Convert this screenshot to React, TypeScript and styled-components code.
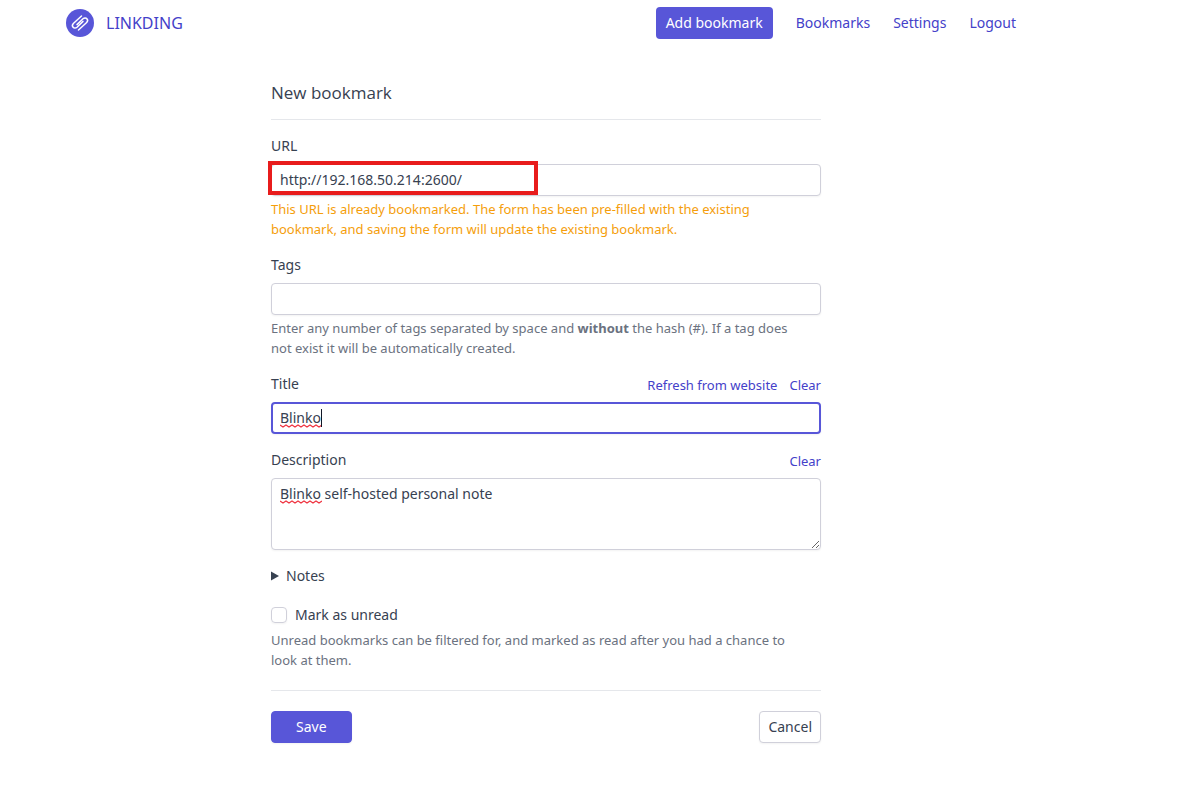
import React, { useState } from "react";
import styled, { createGlobalStyle, css } from "styled-components";

const primary = "#5856d8";
const link = "#4441c9";
const text = "#374151";
const muted = "#6b7280";
const border = "#d0d0da";

const GlobalStyle = createGlobalStyle`
  *, *::before, *::after { box-sizing: border-box; }
  body {
    margin: 0;
    background: #fff;
    color: ${text};
    font-family: "Segoe UI", "Noto Sans", sans-serif;
    font-size: 14px;
    line-height: 24px;
  }
  input, textarea, button { font: inherit; color: inherit; }
`;

const Page = styled.div`
  padding: 7px 153px 24px 66px;
`;

const Header = styled.header`
  display: flex;
  align-items: center;
  justify-content: space-between;
  height: 32px;
`;

const Brand = styled.a`
  display: flex;
  align-items: center;
  gap: 12px;
  color: ${link};
  font-size: 16px;
  text-decoration: none;
`;

const Nav = styled.nav`
  display: flex;
  align-items: center;
  gap: 23px;
  padding-right: 10px;
`;

const NavLink = styled.a<{ $primary?: boolean }>`
  color: ${link};
  text-decoration: none;
  ${(p) =>
    p.$primary &&
    css`
      padding: 4px 10px;
      border-radius: 4px;
      background: ${primary};
      color: #fff;
    `}
`;

const Main = styled.main`
  max-width: 550px;
  margin: 42px auto 0;
`;

const Heading = styled.h1`
  margin: 0 0 14px;
  padding-bottom: 14px;
  border-bottom: 1px solid #e5e7eb;
  font-family: "Segoe UI", "Open Sans", sans-serif;
  font-size: 17px;
  font-weight: 400;
  line-height: 24px;
`;

const Form = styled.form`
  display: flex;
  flex-direction: column;
  gap: 14px;
`;

const Field = styled.div`
  display: flex;
  flex-direction: column;
`;

const LabelRow = styled.div`
  display: flex;
  justify-content: space-between;
  align-items: center;
  margin-bottom: 6px;
`;

const Actions = styled.div`
  display: flex;
  gap: 12px;
`;

const TextButton = styled.button`
  padding: 2px 0 0;
  border: 0;
  background: none;
  color: ${link};
  font-size: 13px;
  line-height: 22px;
  cursor: pointer;
`;

const Control = styled.div`
  position: relative;
  display: flex;
`;

const boxStyle = css`
  width: 100%;
  border: 1px solid ${border};
  border-radius: 4px;
  background: #fff;
  box-shadow: 0 1px 2px rgba(0, 0, 0, 0.05);
  outline: 0;
`;

const TextInput = styled.input<{ $active?: boolean }>`
  ${boxStyle}
  height: 32px;
  padding: 0 8px 2px;
  ${(p) =>
    p.$active &&
    css`
      border: 2px solid ${primary};
      padding: 0 7px 2px;
    `}
`;

const TextArea = styled.textarea`
  ${boxStyle}
  display: block;
  height: 72px;
  padding: 5px 8px;
  line-height: 20px;
  resize: vertical;
`;

const Hint = styled.p<{ $warning?: boolean }>`
  margin: 3px 0 0;
  padding-right: 16px;
  color: ${(p) => (p.$warning ? "#f59e0b" : muted)};
  font-size: 13px;
  line-height: 20px;
`;

const Highlight = styled.span`
  position: absolute;
  top: -3px;
  left: -3px;
  width: 270px;
  height: 34px;
  border: 4px solid #e81c1c;
  pointer-events: none;
`;

const Squiggle = styled.svg`
  position: absolute;
  top: 22px;
  left: 9px;
  pointer-events: none;
`;

const Caret = styled.span`
  position: absolute;
  top: 7px;
  left: 50px;
  width: 1px;
  height: 18px;
  background: #111827;
`;

const Notes = styled.details`
  padding-bottom: 1px;
`;

const Summary = styled.summary`
  display: flex;
  align-items: center;
  gap: 7px;
  list-style: none;
  cursor: pointer;
`;

const CheckLabel = styled.label`
  display: flex;
  align-items: center;
  gap: 8px;
`;

const Checkbox = styled.input`
  appearance: none;
  width: 16px;
  height: 16px;
  margin: 0;
  border: 1px solid ${border};
  border-radius: 4px;
  box-shadow: 0 1px 2px rgba(0, 0, 0, 0.05);
  &:checked { background: ${primary}; }
`;

const Footer = styled.div`
  display: flex;
  justify-content: space-between;
  margin-top: 6px;
  padding-top: 20px;
  border-top: 1px solid #e5e7eb;
`;

const Button = styled.button<{ $primary?: boolean }>`
  height: 32px;
  padding: 0 8px;
  border: 1px solid ${border};
  border-radius: 4px;
  background: #fff;
  box-shadow: 0 1px 2px rgba(0, 0, 0, 0.05);
  ${(p) =>
    p.$primary &&
    css`
      padding: 0 24px;
      border-color: ${primary};
      background: ${primary};
      color: #fff;
    `}
`;

function Logo() {
  return (
    <svg width="28" height="28" viewBox="0 0 28 28" aria-hidden="true">
      <circle cx="14" cy="14" r="14" fill={primary} />
      <g fill="none" stroke="#fff" strokeWidth="1.5" strokeLinecap="round" strokeLinejoin="round">
        <path d="M15.500 7L7.600 14.200C4.600 17 8.100 20.800 11 18.200L17 12.400" />
        <path d="M12.500 21L20.400 13.800C23.400 11 19.900 7.200 17 9.800L11 15.600" />
      </g>
    </svg>
  );
}

function SpellingMark() {
  return (
    <Squiggle width="42" height="4" viewBox="0 0 42 4" aria-hidden="true">
      <path
        d="M0 1l3 2 3-2 3 2 3-2 3 2 3-2 3 2 3-2 3 2 3-2 3 2 3-2 3 2 3-2"
        fill="none"
        stroke="#ef3340"
        strokeWidth="1.2"
      />
    </Squiggle>
  );
}

export default function App() {
  const [url, setUrl] = useState("http://192.168.50.214:2600/");
  const [tags, setTags] = useState("");
  const [title, setTitle] = useState("Blinko");
  const [description, setDescription] = useState("Blinko self-hosted personal note");

  return (
    <>
      <GlobalStyle />
      <Page>
        <Header>
          <Brand href="#">
            <Logo />
            LINKDING
          </Brand>
          <Nav>
            <NavLink href="#new" $primary>Add bookmark</NavLink>
            <NavLink href="#bookmarks">Bookmarks</NavLink>
            <NavLink href="#settings">Settings</NavLink>
            <NavLink href="#logout">Logout</NavLink>
          </Nav>
        </Header>
        <Main>
          <Heading>New bookmark</Heading>
          <Form onSubmit={(e) => e.preventDefault()}>
            <Field>
              <LabelRow><label htmlFor="url">URL</label></LabelRow>
              <Control>
                <TextInput id="url" value={url} onChange={(e) => setUrl(e.target.value)} />
                <Highlight />
              </Control>
              <Hint $warning>
                This URL is already bookmarked. The form has been pre-filled with the existing
                bookmark, and saving the form will update the existing bookmark.
              </Hint>
            </Field>
            <Field>
              <LabelRow><label htmlFor="tags">Tags</label></LabelRow>
              <TextInput id="tags" value={tags} onChange={(e) => setTags(e.target.value)} />
              <Hint>
                Enter any number of tags separated by space and <strong>without</strong> the hash (#).
                If a tag does not exist it will be automatically created.
              </Hint>
            </Field>
            <Field>
              <LabelRow>
                <label htmlFor="title">Title</label>
                <Actions>
                  <TextButton type="button">Refresh from website</TextButton>
                  <TextButton type="button" onClick={() => setTitle("")}>Clear</TextButton>
                </Actions>
              </LabelRow>
              <Control>
                <TextInput id="title" $active spellCheck={false} value={title} onChange={(e) => setTitle(e.target.value)} />
                <SpellingMark />
                <Caret />
              </Control>
            </Field>
            <Field>
              <LabelRow>
                <label htmlFor="description">Description</label>
                <TextButton type="button" onClick={() => setDescription("")}>Clear</TextButton>
              </LabelRow>
              <Control>
                <TextArea id="description" spellCheck={false} value={description} onChange={(e) => setDescription(e.target.value)} />
                <SpellingMark />
              </Control>
            </Field>
            <Notes>
              <Summary>
                <svg width="8" height="10" viewBox="0 0 8 10" aria-hidden="true">
                  <path d="M0 0.500L8 5L0 9.500Z" fill={text} />
                </svg>
                Notes
              </Summary>
            </Notes>
            <Field>
              <CheckLabel>
                <Checkbox type="checkbox" />
                Mark as unread
              </CheckLabel>
              <Hint>
                Unread bookmarks can be filtered for, and marked as read after you had a chance to
                look at them.
              </Hint>
            </Field>
            <Footer>
              <Button type="submit" $primary>Save</Button>
              <Button type="button">Cancel</Button>
            </Footer>
          </Form>
        </Main>
      </Page>
    </>
  );
}
